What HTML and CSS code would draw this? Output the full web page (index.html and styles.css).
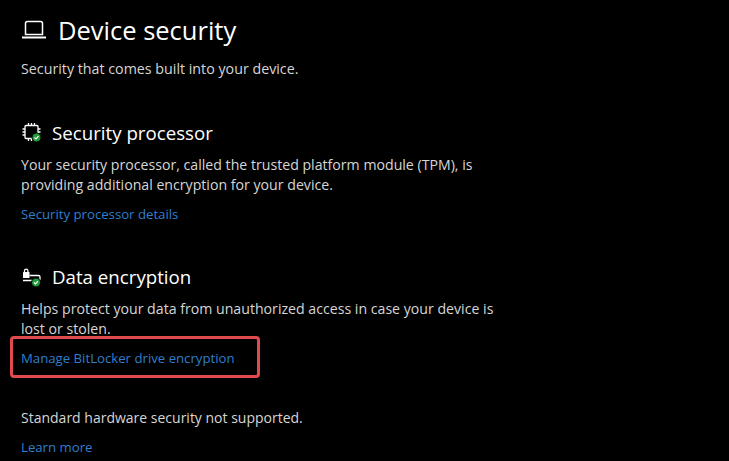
FILE: index.html
```html
<!DOCTYPE html>
<html lang="en">
<head>
<meta charset="utf-8">
<title>Device security</title>
<link rel="stylesheet" href="styles.css">
</head>
<body>
<main class="page">
  <header class="title-row">
    <svg class="title-icon" viewBox="0 0 26 20" width="26" height="20" fill="none" stroke="#fff" stroke-width="1.500"><path d="M4.500 14.500V3.500a2 2 0 0 1 2-2h13a2 2 0 0 1 2 2v11z"/><path d="M1 17.500h24" stroke-width="2"/></svg>
    <h1 class="title">Device security</h1>
  </header>
  <p class="lead">Security that comes built into your device.</p>

  <section class="section section-processor">
    <div class="section-head">
      <svg class="section-icon" viewBox="0 0 22 22" width="22" height="22" fill="none" stroke="#fff" stroke-width="1.300">
        <rect x="4" y="3.500" width="13" height="13" rx="1"/>
        <path d="M7.500 1v2.500M10.500 1v2.500M13.500 1v2.500M7.500 16.500V19M10.500 16.500V19M1.500 7H4M1.500 10H4M1.500 13H4M17 7h2.500M17 10h2.500"/>
        <circle cx="15.500" cy="15.500" r="4.500" fill="#1f9d3c" stroke="#000" stroke-width="1"/>
        <path d="M13.500 15.500l1.500 1.500 2.500-2.800" stroke="#fff" stroke-width="1.200"/>
      </svg>
      <h2 class="section-title">Security processor</h2>
    </div>
    <p class="text">Your security processor, called the trusted platform module (TPM), is<br>providing additional encryption for your device.</p>
    <a class="link link-details" href="#">Security processor details</a>
  </section>

  <section class="section section-encryption">
    <div class="section-head">
      <svg class="section-icon" viewBox="0 0 22 22" width="22" height="22" fill="none" stroke="#fff" stroke-width="1.300">
        <rect x="2" y="6" width="6.500" height="6" rx="0.500" fill="#fff" stroke="none"/>
        <path d="M3.500 6V4.800a1.700 1.700 0 0 1 3.400 0V6"/>
        <path d="M8.500 9.500h9a1.500 1.500 0 0 1 1.500 1.500v2a1.500 1.500 0 0 1-1.500 1.500H2"/>
        <circle cx="15" cy="16.500" r="4.500" fill="#1f9d3c" stroke="#000" stroke-width="1"/>
        <path d="M13 16.500l1.500 1.500 2.500-2.800" stroke="#fff" stroke-width="1.200"/>
      </svg>
      <h2 class="section-title">Data encryption</h2>
    </div>
    <p class="text">Helps protect your data from unauthorized access in case your device is<br>lost or stolen.</p>
    <div class="highlighted">
      <a class="link" href="#">Manage BitLocker drive encryption</a>
      <span class="highlight-box"></span>
    </div>
  </section>

  <p class="text status">Standard hardware security not supported.</p>
  <a class="link link-learn" href="#">Learn more</a>
</main>
</body>
</html>
```
FILE: styles.css
```css
html, body {
  margin: 0;
  height: 100%;
  background: #000;
  overflow: hidden;
}
.page {
  padding: 11px 0 0 21px;
  font-family: "Open Sans", "Noto Sans", sans-serif;
  color: #d6d6d6;
  font-size: 14px;
}
.title-row {
  display: flex;
  align-items: center;
  gap: 11px;
  height: 38px;
}
.title-icon {
  flex: none;
}
.title {
  margin: 0;
  font-size: 25.500px;
  font-weight: 400;
  line-height: 38px;
  color: #fff;
}
.lead {
  margin: 10px 0 0;
  font-size: 14.250px;
  line-height: 20px;
}
.section-processor {
  margin-top: 40px;
}
.section-encryption {
  margin-top: 40px;
}
.section-head {
  display: flex;
  align-items: center;
  gap: 9px;
  height: 28px;
}
.section-icon {
  flex: none;
}
.section-title {
  margin: 0;
  font-size: 18.700px;
  font-weight: 400;
  line-height: 28px;
  color: #fff;
}
.text {
  margin: 8px 0 0;
  font-size: 14.150px;
  line-height: 20px;
}
.link {
  display: block;
  width: max-content;
  color: #2f7fcc;
  font-size: 13.200px;
  line-height: 18px;
  text-decoration: none;
}
.link-details {
  margin-top: 10px;
}
.highlighted {
  position: relative;
  margin-top: 10px;
  width: max-content;
}
.highlight-box {
  position: absolute;
  left: -11px;
  top: -13px;
  width: 244px;
  height: 36px;
  border: 3px solid #e04a4f;
  border-radius: 4px;
}
.status {
  margin-top: 41px;
  font-size: 14px;
}
.link-learn {
  margin-top: 10px;
}
```
